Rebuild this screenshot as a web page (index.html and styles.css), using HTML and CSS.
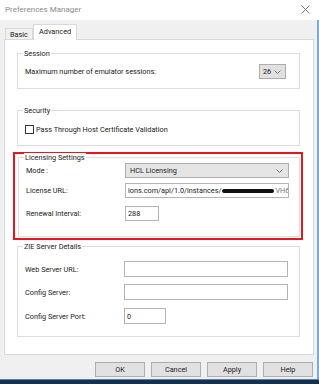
FILE: index.html
```html
<!DOCTYPE html>
<html lang="en">
<head>
    <meta charset="UTF-8">
    <meta name="viewport" content="width=device-width, initial-scale=1.0">
    <title>Preferences Manager</title>
    <link rel="stylesheet" href="styles.css">
</head>
<body>
    <div class="titlebar">
        <span class="title">Preferences Manager</span>
        <svg class="close" width="9" height="9" viewBox="0 0 9 9">
            <path d="M0.5 0.5 L8.5 8.5 M8.5 0.5 L0.5 8.5" stroke="#7a7a7a" stroke-width="1" fill="none"/>
        </svg>
    </div>

    <div class="dialog">
        <div class="tabs">
            <div class="tab">Basic</div>
            <div class="tab active">Advanced</div>
        </div>

        <div class="panel">
            <div class="group session">
                <div class="group-title">Session</div>
                <div class="row">
                    <span class="label">Maximum number of emulator sessions:</span>
                    <div class="combo small">
                        <span>26</span>
                        <svg width="7" height="4" viewBox="0 0 7 4"><path d="M0.5 0.5 L3.5 3.5 L6.5 0.5" stroke="#6e6e6e" fill="none"/></svg>
                    </div>
                </div>
            </div>

            <div class="group security">
                <div class="group-title">Security</div>
                <div class="row">
                    <span class="checkbox"></span>
                    <span>Pass Through Host Certificate Validation</span>
                </div>
            </div>

            <div class="highlight">
                <div class="group licensing">
                    <div class="group-title">Licensing Settings</div>
                    <div class="row">
                        <span class="label">Mode :</span>
                        <div class="combo wide">
                            <span>HCL Licensing</span>
                            <svg width="7" height="4" viewBox="0 0 7 4"><path d="M0.5 0.5 L3.5 3.5 L6.5 0.5" stroke="#6e6e6e" fill="none"/></svg>
                        </div>
                    </div>
                    <div class="row gap-5">
                        <span class="label">License URL:</span>
                        <div class="textbox wide">ions.com/api/1.0/instances/<span class="redact"></span><span class="tail">VH6</span></div>
                    </div>
                    <div class="row gap-8">
                        <span class="label">Renewal Interval:</span>
                        <div class="textbox renewal">288</div>
                    </div>
                </div>
            </div>

            <div class="group zie">
                <div class="group-title">ZIE Server Details</div>
                <div class="row tall first">
                    <span class="label">Web Server URL:</span>
                    <div class="textbox wide"></div>
                </div>
                <div class="row tall gap-7">
                    <span class="label">Config Server:</span>
                    <div class="textbox wide"></div>
                </div>
                <div class="row tall gap-8">
                    <span class="label">Config Server Port:</span>
                    <div class="textbox port">0</div>
                </div>
            </div>
        </div>

        <div class="buttons">
            <button>OK</button>
            <button>Cancel</button>
            <button>Apply</button>
            <button>Help</button>
        </div>
    </div>

    <div class="taskbar"></div>
</body>
</html>
```

FILE: styles.css
```css
body {
    margin: 0;
    width: 319px;
    height: 384px;
    overflow: hidden;
    font-family: 'Roboto', 'Liberation Sans', sans-serif;
    font-size: 7.3px;
    color: #222;
    background-color: #f0f0f0;
}

.titlebar {
    height: 20px;
    background-color: #fff;
    display: flex;
    align-items: center;
    justify-content: space-between;
    padding: 0 9px 1px 5px;
    box-sizing: border-box;
}

.title {
    font-size: 8px;
    color: #8c8c8c;
}

.dialog {
    height: 359px;
    padding-top: 3px;
    box-sizing: border-box;
    border-right: 2px solid #7eaad6;
}

.tabs {
    display: flex;
    align-items: flex-end;
    margin-left: 5px;
    height: 16px;
}

.tab {
    height: 11px;
    line-height: 11px;
    padding: 0 4px;
    border: 1px solid #d9d9d9;
    border-bottom: none;
    background-color: #f0f0f0;
    box-sizing: border-box;
    width: 28px;
}

.tab.active {
    height: 16px;
    line-height: 14px;
    width: 44px;
    padding: 0 5px;
    background-color: #fff;
    margin-bottom: -1px;
    position: relative;
    z-index: 1;
}

.panel {
    margin-left: 4px;
    width: 310px;
    height: 316px;
    box-sizing: border-box;
    border: 1px solid #d9d9d9;
    background-color: #fff;
    padding-top: 13px;
}

.group {
    border: 1px solid #dedede;
    margin-left: 12px;
    width: 283px;
    box-sizing: border-box;
}

.group-title {
    width: fit-content;
    margin: -5px 0 0 5px;
    padding: 0 1px;
    height: 10px;
    line-height: 10px;
    background-color: #fff;
}

.row {
    display: flex;
    align-items: center;
    padding-left: 7px;
    height: 15px;
}

.tall {
    height: 16px;
}

.gap-5 { margin-top: 5px; }
.gap-7 { margin-top: 7px; }
.gap-8 { margin-top: 8px; }

.label {
    width: 99px;
    flex-shrink: 0;
}

.session {
    height: 36px;
}

.session .row {
    margin-top: 5px;
}

.session .label {
    width: auto;
}

.security {
    margin-top: 21px;
    height: 36px;
}

.security .row {
    margin-top: 6px;
    height: 14px;
}

.checkbox {
    width: 9px;
    height: 9px;
    border: 1px solid #333;
    box-sizing: border-box;
    margin-right: 2px;
    background-color: #fff;
}

.highlight {
    margin: 6px 0 0 8px;
    width: 290px;
    height: 88px;
    box-sizing: border-box;
    border: 2px solid #e8141e;
    padding-top: 3px;
}

.licensing {
    margin-left: 3px;
    width: 282px;
    height: 80px;
}

.licensing .row:first-of-type {
    margin-top: 6px;
}

.zie {
    margin-top: 6px;
    height: 91px;
}

.zie .first {
    margin-top: 9px;
}

.combo {
    display: flex;
    align-items: center;
    justify-content: space-between;
    height: 15px;
    box-sizing: border-box;
    border: 1px solid #adadad;
    background-color: #e5e5e5;
    padding: 0 5px 0 4px;
}

.combo.small {
    width: 27px;
    margin-left: auto;
    margin-right: 13px;
    padding: 0 4px 0 3px;
    background-color: #e1e1e1;
}

.combo.wide {
    width: 164px;
}

.textbox {
    height: 100%;
    box-sizing: border-box;
    border: 1px solid #b4b4b4;
    background-color: #fff;
    padding: 0 2px;
    line-height: 13px;
    white-space: nowrap;
    overflow: hidden;
    display: flex;
    align-items: center;
}

.textbox.wide {
    width: 164px;
}

.textbox.renewal {
    width: 34px;
}

.textbox.port {
    width: 42px;
}

.redact {
    flex-shrink: 0;
    height: 4px;
    width: 52px;
    background-color: #111;
    border-radius: 2px;
    margin-left: 1px;
}

.tail {
    color: #777;
    margin-left: 1px;
}

.buttons {
    display: flex;
    justify-content: flex-end;
    gap: 6px;
    margin-top: 7px;
    padding-right: 4px;
}

button {
    width: 50px;
    height: 15px;
    padding: 0;
    font-family: 'Roboto', 'Liberation Sans', sans-serif;
    font-size: 7.3px;
    color: #222;
    background-color: #e1e1e1;
    border: 1px solid #adadad;
    border-radius: 0;
}

.taskbar {
    height: 5px;
    background-color: #16304f;
    border-top: 1px solid #5a7fa6;
    box-sizing: border-box;
}
```
